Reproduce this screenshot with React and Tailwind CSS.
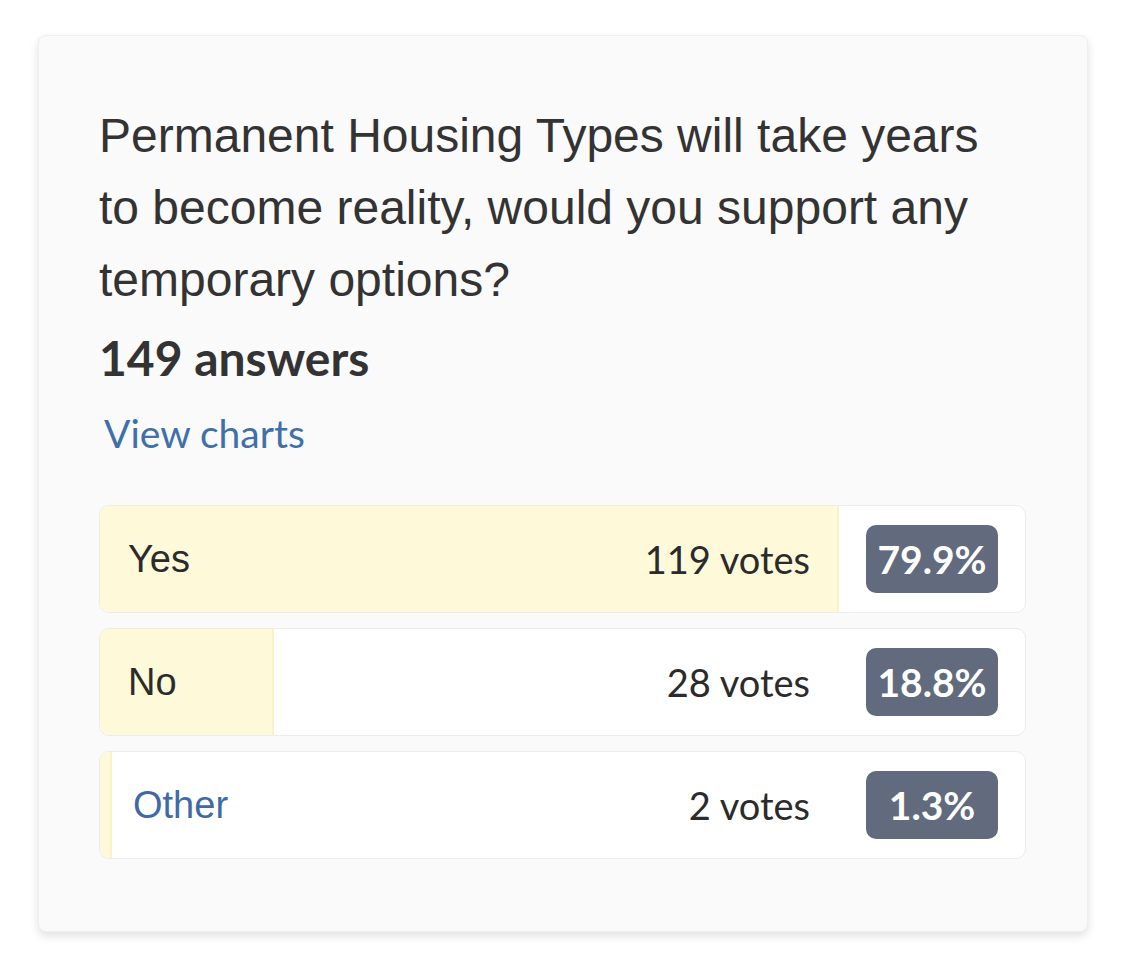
import React from "react";

const rows = [
  { label: "Yes", votes: "119 votes", pct: "79.9%", w: 79.9, link: false },
  { label: "No", votes: "28 votes", pct: "18.8%", w: 18.8, link: false },
  { label: "Other", votes: "2 votes", pct: "1.3%", w: 1.3, link: true },
];

export default function App() {
  return (
    <div className="min-h-[967px] w-[1125px] bg-white pt-[35px] pl-[38px]">
      <div className="w-[1050px] h-[897px] rounded-[8px] bg-[#fafafa] border border-[#efefef] shadow-[0_4px_10px_rgba(0,0,0,0.12)] pt-[64px] pl-[60px] pr-[61px]">
        <div className="font-['Liberation_Sans',Arial,sans-serif] text-[48px] leading-[72px] text-[#333333] pr-[20px]">
          Permanent Housing Types will take years to become reality, would you support any temporary options?
        </div>
        <div className="mt-[12px] font-['Lato',sans-serif] text-[48px] leading-[60px] font-bold text-[#333333]">
          149 answers
        </div>
        <div className="mt-[23px] ml-[5px] font-['Lato',sans-serif] text-[39px] leading-[44px] text-[#3f70a9]">
          View charts
        </div>
        <div className="mt-[50px] flex flex-col gap-[15px]">
          {rows.map((r) => (
            <div
              key={r.label}
              className="relative h-[108px] rounded-[10px] border border-[#ececec] bg-white overflow-hidden"
            >
              <div
                className="absolute left-0 top-0 bottom-0 bg-[#fdf9d9] border-r-2 border-[#faf3c6]"
                style={{ width: `${r.w}%` }}
              />
              <div className="relative flex h-full items-center pl-[28px] pr-[27px]">
                <div
                  className={`flex-1 font-['Liberation_Sans',Arial,sans-serif] text-[38px] ${
                    r.link ? "text-[#3f6aa6] pl-[5px]" : "text-[#2b2b2b]"
                  }`}
                >
                  {r.label}
                </div>
                <div className="mr-[56px] font-['Lato',sans-serif] text-[38px] text-[#2b2b2b]">
                  {r.votes}
                </div>
                <div className="flex h-[68px] w-[132px] items-center justify-center rounded-[10px] bg-[#626b7d] font-['Lato',sans-serif] text-[39px] font-bold text-white">
                  {r.pct}
                </div>
              </div>
            </div>
          ))}
        </div>
      </div>
    </div>
  );
}
